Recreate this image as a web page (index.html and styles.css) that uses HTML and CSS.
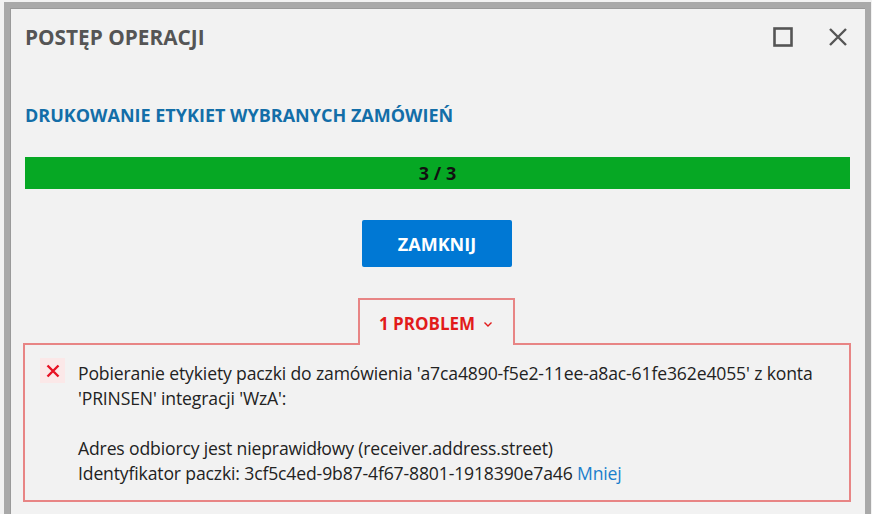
FILE: index.html
```html
<!DOCTYPE html>
<html lang="pl">
<head>
  <meta charset="UTF-8">
  <meta name="viewport" content="width=device-width, initial-scale=1.0">
  <title>Postęp operacji</title>
  <link rel="stylesheet" href="styles.css">
</head>
<body>
  <div class="window">

    <div class="header">
      <h1 class="title">POSTĘP OPERACJI</h1>
      <div class="window-buttons">
        <span class="win-btn">
          <svg width="20" height="20" viewBox="0 0 20 20"><rect x="1.5" y="1.5" width="17" height="17" fill="none" stroke="#555" stroke-width="2.6"/></svg>
        </span>
        <span class="win-btn">
          <svg width="20" height="20" viewBox="0 0 20 20"><path d="M2 2 L18 18 M18 2 L2 18" stroke="#555" stroke-width="2.4" fill="none"/></svg>
        </span>
      </div>
    </div>

    <div class="content">
      <h2 class="subtitle">DRUKOWANIE ETYKIET WYBRANYCH ZAMÓWIEŃ</h2>

      <div class="progress">
        <div class="progress-fill">3 / 3</div>
      </div>

      <div class="actions">
        <button class="button-primary">ZAMKNIJ</button>
      </div>

      <div class="problems">
        <div class="problems-tab">1 PROBLEM
          <svg width="10" height="10" viewBox="0 0 10 10"><path d="M1.5 3.5 L5 7 L8.5 3.5" stroke="#e21b1b" stroke-width="1.4" fill="none"/></svg>
        </div>
        <div class="problems-panel">
          <div class="problem">
            <span class="problem-icon">
              <svg width="14" height="14" viewBox="0 0 14 14"><path d="M1.5 1.5 L12.5 12.5 M12.5 1.5 L1.5 12.5" stroke="#e81123" stroke-width="2.4" fill="none"/></svg>
            </span>
            <div class="problem-text">
              <p>Pobieranie etykiety paczki do zamówienia 'a7ca4890-f5e2-11ee-a8ac-61fe362e4055' z konta 'PRINSEN' integracji 'WzA':</p>
              <p class="gap">Adres odbiorcy jest nieprawidłowy (receiver.address.street)<br>Identyfikator paczki: 3cf5c4ed-9b87-4f67-8801-1918390e7a46 <a href="#" class="link">Mniej</a></p>
            </div>
          </div>
        </div>
      </div>
    </div>

  </div>
</body>
</html>
```

FILE: styles.css
```css
body {
  margin: 0;
  padding: 0;
  background-color: #f2f2f2;
  font-family: "Open Sans", "Noto Sans", Arial, sans-serif;
  color: #222;
}
.window {
  margin: 2px 0 0 4px;
  width: 855px;
  height: 520px;
  border: 6px solid #a9a9a9;
  border-bottom: none;
  box-shadow: inset 1px 1px 0 #9a9a9a;
  background-color: #f2f2f2;
}
.header {
  display: flex;
  align-items: center;
  justify-content: space-between;
  height: 58px;
  padding: 0 17px 0 15px;
}
.title {
  margin: 0;
  font-size: 20.8px;
  font-weight: 700;
  color: #555;
}
.window-buttons {
  display: flex;
  gap: 35px;
  align-items: center;
}
.win-btn {
  display: flex;
  width: 20px;
  height: 20px;
}
.content {
  padding: 0 14px 0 13px;
}
.subtitle {
  margin: 39px 0 0 2px;
  height: 20px;
  line-height: 20px;
  font-size: 18px;
  font-weight: 700;
  color: #136ea8;
}
.progress {
  margin: 32px 1px 0 2px;
  height: 32px;
  background-color: #ddd;
}
.progress-fill {
  height: 100%;
  background-color: #06a824;
  color: #111;
  font-weight: 700;
  font-size: 18px;
  display: flex;
  align-items: center;
  justify-content: center;
}
.actions {
  display: flex;
  justify-content: center;
  margin-top: 31px;
}
.button-primary {
  width: 150px;
  height: 47px;
  border: none;
  border-radius: 2px;
  background-color: #0078d4;
  color: #fff;
  font-family: inherit;
  font-size: 18px;
  font-weight: 700;
  cursor: pointer;
}
.problems {
  margin-top: 31px;
  display: flex;
  flex-direction: column;
  align-items: center;
}
.problems-tab {
  position: relative;
  z-index: 1;
  margin-left: -2px;
  width: 157px;
  height: 47px;
  margin-bottom: -2px;
  border: 2px solid #e88585;
  border-bottom: none;
  background-color: #f2f2f2;
  color: #e21b1b;
  font-size: 17px;
  font-weight: 700;
  display: flex;
  align-items: center;
  justify-content: center;
  gap: 8px;
  box-sizing: border-box;
  padding-top: 2px;
}
.problems-panel {
  align-self: stretch;
  border: 2px solid #e88585;
  padding: 16px 15px 14px 15px;
}
.problem {
  display: flex;
  gap: 13px;
}
.problem-icon {
  flex: none;
  width: 25px;
  height: 25px;
  margin-top: -3px;
  background-color: #fbe8e8;
  display: flex;
  align-items: center;
  justify-content: center;
}
.problem-text {
  font-size: 17.6px;
  line-height: 25px;
  letter-spacing: -0.15px;
}
.problem-text p {
  margin: 0;
}
.problem-text .gap {
  margin-top: 25px;
}
.link {
  color: #1a7fcc;
  text-decoration: none;
}
```
